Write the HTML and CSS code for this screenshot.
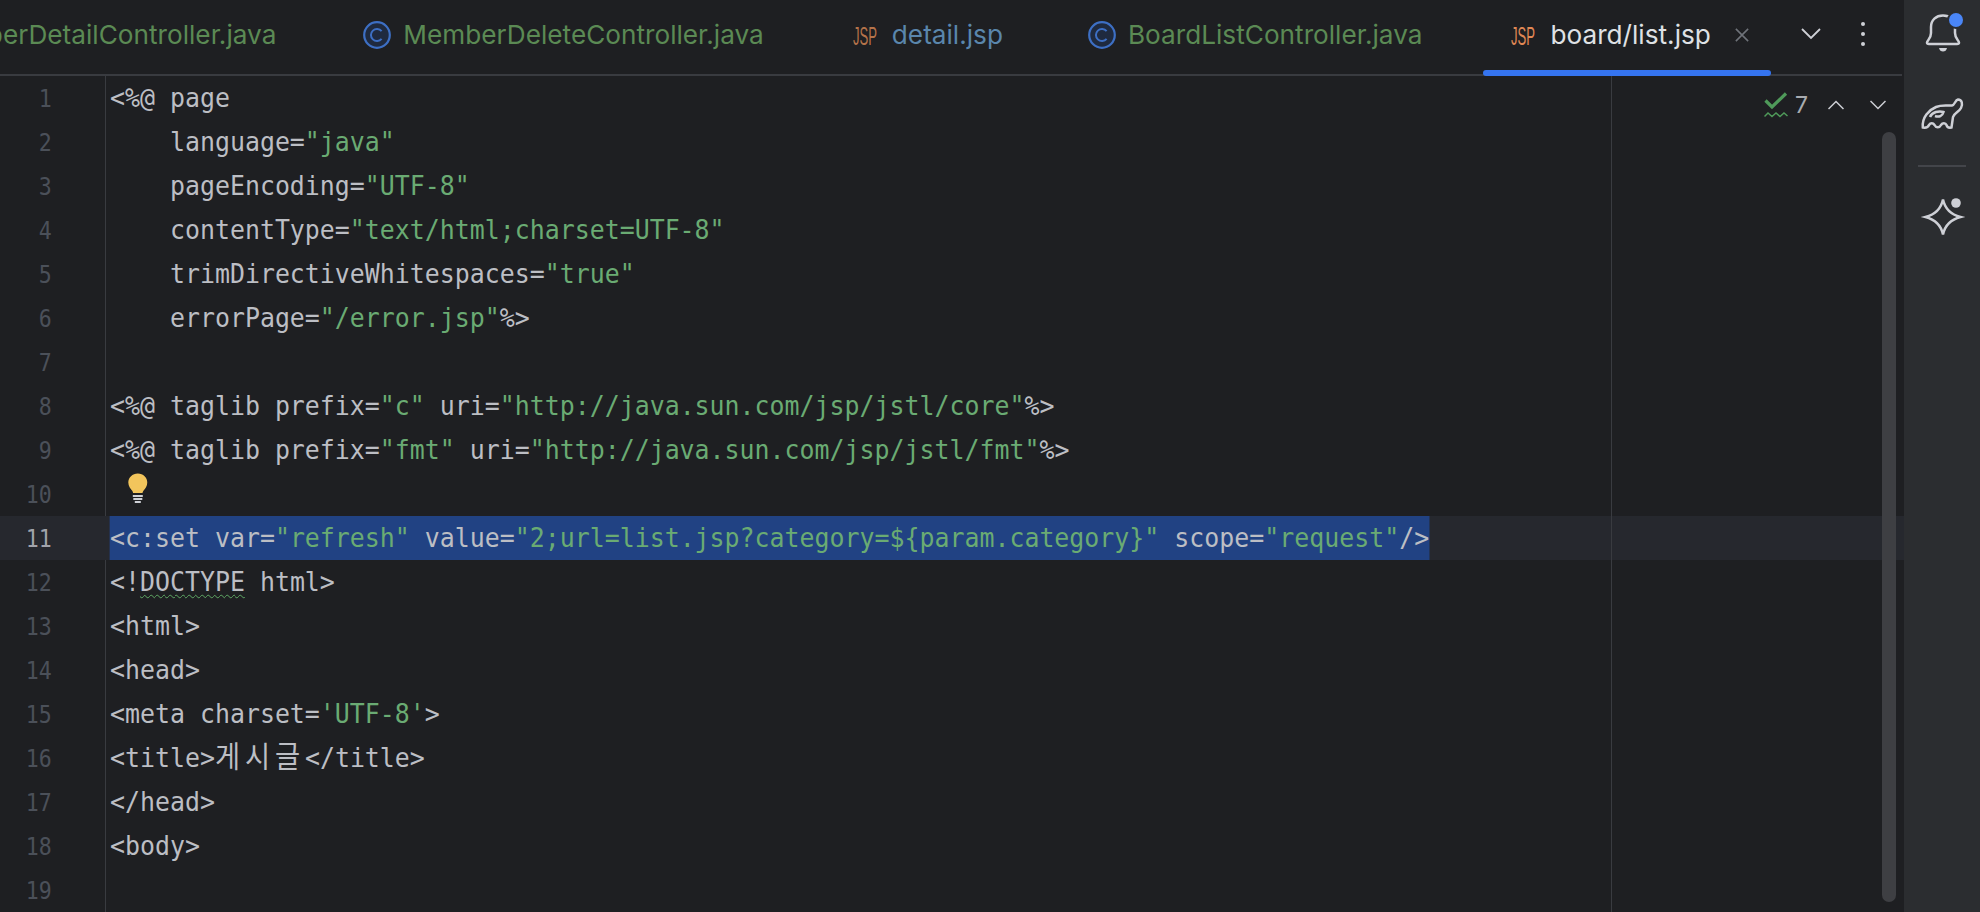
FILE: index.html
```html
<!DOCTYPE html>
<html lang="ko">
<head>
<meta charset="utf-8">
<title>board/list.jsp</title>
<link rel="stylesheet" href="styles.css">
</head>
<body>
<div class="app">
  <div class="main">
    <div class="tabs">
      <div class="tab tab-first"><span class="java">MemberDetailController.java</span></div>
      <div class="tab">
        <svg class="cicon" viewBox="0 0 28 28"><circle cx="14" cy="14" r="12.8"/><path d="M18.6 10.2A6 6 0 1 0 18.6 17.8"/></svg>
        <span class="java">MemberDeleteController.java</span>
      </div>
      <div class="tab tab-jsp">
        <svg class="jsp" viewBox="0 0 24 22"><text x="0" y="21" textLength="24" lengthAdjust="spacingAndGlyphs">JSP</text></svg>
        <span class="modified">detail.jsp</span>
      </div>
      <div class="tab">
        <svg class="cicon" viewBox="0 0 28 28"><circle cx="14" cy="14" r="12.8"/><path d="M18.6 10.2A6 6 0 1 0 18.6 17.8"/></svg>
        <span class="java">BoardListController.java</span>
      </div>
      <div class="tab tab-jsp tab-active">
        <svg class="jsp jsp-active" viewBox="0 0 24 22"><text x="0" y="21" textLength="24" lengthAdjust="spacingAndGlyphs">JSP</text></svg>
        <span class="active-name">board/list.jsp</span>
        <svg class="close" viewBox="0 0 16 16"><path d="M1 1L15 15M15 1L1 15"/></svg>
      </div>
      <div class="tab-tools">
        <svg class="chev" viewBox="0 0 20 12"><path d="M1 1L10 10L19 1"/></svg>
        <div class="dots"><i></i><i></i><i></i></div>
      </div>
    </div>
    <div class="editor">
      <div class="line"><div class="num"><span>1</span></div><div class="code">&lt;%@ page</div></div>
      <div class="line"><div class="num"><span>2</span></div><div class="code">    language=<span class="s">"java"</span></div></div>
      <div class="line"><div class="num"><span>3</span></div><div class="code">    pageEncoding=<span class="s">"UTF-8"</span></div></div>
      <div class="line"><div class="num"><span>4</span></div><div class="code">    contentType=<span class="s">"text/html;charset=UTF-8"</span></div></div>
      <div class="line"><div class="num"><span>5</span></div><div class="code">    trimDirectiveWhitespaces=<span class="s">"true"</span></div></div>
      <div class="line"><div class="num"><span>6</span></div><div class="code">    errorPage=<span class="s">"/error.jsp"</span>%&gt;</div></div>
      <div class="line"><div class="num"><span>7</span></div><div class="code"></div></div>
      <div class="line"><div class="num"><span>8</span></div><div class="code">&lt;%@ taglib prefix=<span class="s">"c"</span> uri=<span class="s">"http://java.sun.com/jsp/jstl/core"</span>%&gt;</div></div>
      <div class="line"><div class="num"><span>9</span></div><div class="code">&lt;%@ taglib prefix=<span class="s">"fmt"</span> uri=<span class="s">"http://java.sun.com/jsp/jstl/fmt"</span>%&gt;</div></div>
      <div class="line"><div class="num"><span>10</span></div><div class="code"><svg class="bulb" viewBox="0 0 20 30" preserveAspectRatio="none"><path class="bulb-glass" d="M10 0.5C4.6 0.5 0.5 4.6 0.5 9.6C0.5 13.4 2.7 15.6 4.2 17.5C5 18.5 5.2 19.4 5.3 20H14.7C14.8 19.4 15 18.5 15.8 17.5C17.300 15.6 19.500 13.4 19.500 9.600C19.500 4.600 15.400 0.500 10 0.500Z"/><path class="bulb-base" d="M5 23H15M5.500 26H14.500M7 29H13"/></svg></div></div>
      <div class="line line-current"><div class="num"><span>11</span></div><div class="code"><span class="sel">&lt;c:set var=<span class="s">"refresh"</span> value=<span class="s">"2;url=list.jsp?category=${param.category}"</span> scope=<span class="s">"request"</span>/&gt;</span></div></div>
      <div class="line"><div class="num"><span>12</span></div><div class="code">&lt;!<span class="typo">DOCTYPE</span> html&gt;</div></div>
      <div class="line"><div class="num"><span>13</span></div><div class="code">&lt;html&gt;</div></div>
      <div class="line"><div class="num"><span>14</span></div><div class="code">&lt;head&gt;</div></div>
      <div class="line"><div class="num"><span>15</span></div><div class="code">&lt;meta charset=<span class="s">'UTF-8'</span>&gt;</div></div>
      <div class="line"><div class="num"><span>16</span></div><div class="code">&lt;title&gt;<span class="ko">게시글</span>&lt;/title&gt;</div></div>
      <div class="line"><div class="num"><span>17</span></div><div class="code">&lt;/head&gt;</div></div>
      <div class="line"><div class="num"><span>18</span></div><div class="code">&lt;body&gt;</div></div>
      <div class="line"><div class="num"><span>19</span></div><div class="code"></div></div>

      <div class="margin-line"></div>
      <div class="inspect">
        <svg class="check" viewBox="0 0 24 26"><path class="check-mark" d="M1.500 8.500L8 15L22 1.500"/><path class="check-wave" d="M0.500 24.500L4 21L8 24.500L12 21L16 24.500L20 21L23.500 24"/></svg>
        <span class="count">7</span>
        <svg class="nav nav-up" viewBox="0 0 16 10"><path d="M0.500 9L8 1.500L15.500 9"/></svg>
        <svg class="nav" viewBox="0 0 16 10"><path d="M0.500 1L8 8.500L15.500 1"/></svg>
      </div>
      <div class="scrollbar"></div>
    </div>
  </div>
  <div class="side">
    <svg class="side-icon bell" viewBox="0 0 36 40"><path class="ln" d="M2 29.500C2 27.500 6 26 6 20V14C6 7 11 2.500 18 2.500C25 2.500 30 7 30 14V20C30 26 34 27.500 34 29.500C34 30.800 33 31 32 31H4C3 31 2 30.800 2 29.500Z"/><path class="solid" d="M14 35H22C21.500 37.500 20 38.500 18 38.500C16 38.500 14.500 37.500 14 35Z"/><circle class="dot-ring" cx="31" cy="7" r="9"/><circle class="dot" cx="31" cy="7" r="7"/></svg>
    <svg class="side-icon elephant" viewBox="0 0 42 32"><path class="ln" d="M1.800 29.500C0.800 19 8 12 15 9C21 6.500 27 8 31 7.500C34 7 34 2 37 1.500C41 1.500 42 6 40 10C38 14 33 15 32 19L30.500 29.500C27.500 30 26 29.500 25.500 27C24.500 24.500 21.500 24.500 20 27C18.500 30 15 30 13.500 27C12 24.500 9.500 24.500 8 27C7 29.500 5 30 1.800 29.500Z"/><path class="ln" d="M9 19C11 14 18 12.500 22.500 14C21.500 18 18 19.500 14 18"/></svg>
    <div class="side-rule"></div>
    <svg class="side-icon star" viewBox="0 0 38 38"><path class="ln" d="M19 1.500C21 11 27 16.500 36.500 19C27 21.500 21 27 19 36.500C17 27 11 21.500 1.500 19C11 16.500 17 11 19 1.500Z"/><circle class="solid" cx="32" cy="5" r="4.800"/></svg>
  </div>
</div>
</body>
</html>
```
FILE: styles.css
```css
* { box-sizing: border-box; }
html, body { margin: 0; height: 912px; overflow: hidden; background: #1e1f22; }
.app { display: flex; height: 912px; width: 1980px; }
.main { width: 1904px; display: flex; flex-direction: column; }
.side { width: 76px; background: #2b2d30; display: flex; flex-direction: column; align-items: center; padding-top: 13px; }

.tabs { height: 76px; margin-right: 2px; border-bottom: 2px solid #393b40; display: flex; align-items: stretch; font-family: Inter, sans-serif; font-size: 26.200px; white-space: nowrap; }
.tab { display: flex; align-items: center; gap: 12px; padding: 0 61px 7px 28px; flex: none; height: 76px; }
.tab-first { margin-left: -75px; padding-left: 0; padding-right: 59px; }
.tab-jsp { gap: 15px; padding-right: 57px; }
.java { color: #5b8a54; }
.modified { color: #5a86ac; }
.active-name { color: #dfe1e5; }
.tab-active { position: relative; padding-right: 22px; }
.tab-active::after { content: ""; position: absolute; left: 0; right: 0; top: 70px; height: 6px; border-radius: 3px; background: #3574f0; }
.cicon { width: 28px; height: 28px; flex: none; }
.cicon circle { fill: #1f2a3f; stroke: #3d6fc4; stroke-width: 2.2; }
.cicon path { fill: none; stroke: #3d6fc4; stroke-width: 2; }
.jsp { width: 24px; height: 22px; flex: none; overflow: visible; }
.jsp text { font-family: "Liberation Sans", sans-serif; font-size: 25px; fill: #b5734a; }
.jsp-active text { fill: #e08855; }
.close { width: 14px; height: 14px; margin-left: 9px; flex: none; }
.close path { stroke: #6f737a; stroke-width: 1.800; fill: none; }
.tab-tools { display: flex; align-items: center; gap: 40px; padding: 0 0 6px 30px; }
.chev { width: 20px; height: 12px; }
.chev path { stroke: #ced0d6; stroke-width: 1.800; fill: none; }
.dots { display: flex; flex-direction: column; gap: 5.500px; }
.dots i { display: block; width: 4.500px; height: 4.500px; border-radius: 50%; background: #ced0d6; }

.editor { position: relative; flex: 1; font-family: "DejaVu Sans Mono", monospace; color: #bcbec4; }
.line { display: flex; height: 44px; line-height: 44px; white-space: pre; }
.line-current { background: #26282e; }
.num { width: 106px; padding-right: 53px; border-right: 1px solid #393b40; text-align: right; color: #4b5059; font-size: 24.700px; line-height: 46px; }
.num span { display: inline-block; transform: scaleX(0.874); transform-origin: 100% 50%; }
.line-current .num { color: #a1a3ab; border-right-color: #26282e; }
.code { padding-left: 4.400px; flex: 1; font-size: 27.400px; transform: scaleX(0.909); transform-origin: 0 50%; }
.s { color: #6aab73; }
.sel { display: inline-block; height: 44px; background: #214283; }
.typo { text-decoration: underline wavy #5fa864 1.300px; text-underline-offset: 3px; }
.ko { font-family: "Noto Sans CJK KR", sans-serif; letter-spacing: 5.400px; font-size: 30px; line-height: 0; }
.bulb { width: 22px; height: 30px; margin: 1px 0 0 19.400px; display: block; }
.bulb-glass { fill: #f2c55c; }
.bulb-base { stroke: #ced0d6; stroke-width: 2; fill: none; }

.margin-line { position: absolute; left: 1611px; top: 0; bottom: 0; width: 1px; background: #393b40; }
.inspect { position: absolute; left: 1764px; top: 15px; display: flex; align-items: center; color: #a8abb0; font-family: Inter, sans-serif; font-size: 23px; }
.check { width: 24px; height: 26px; }
.check-mark { stroke: #4f9a5a; stroke-width: 3.200; fill: none; }
.check-wave { stroke: #4f9a5a; stroke-width: 1.500; fill: none; }
.count { margin: 0 20px 0 7px; }
.nav { width: 16px; height: 10px; }
.nav-up { margin-right: 26px; }
.nav path { stroke: #ced0d6; stroke-width: 1.500; fill: none; }
.scrollbar { position: absolute; left: 1882px; top: 56px; height: 770px; width: 14px; border-radius: 7px; background: #3e3f43; }

.side-icon { display: block; flex: none; overflow: visible; }
.ln { fill: none; stroke: #ced0d6; stroke-width: 2.500; }
.solid { fill: #ced0d6; }
.dot { fill: #4a86f7; }
.dot-ring { fill: #2b2d30; }
.bell { width: 36px; height: 40px; margin-left: 2px; }
.elephant { width: 42px; height: 32px; margin-top: 45px; }
.side-rule { width: 48px; height: 2px; background: #43454a; margin-top: 35px; }
.star { width: 38px; height: 38px; margin: 31px 0 0 2px; }
```
